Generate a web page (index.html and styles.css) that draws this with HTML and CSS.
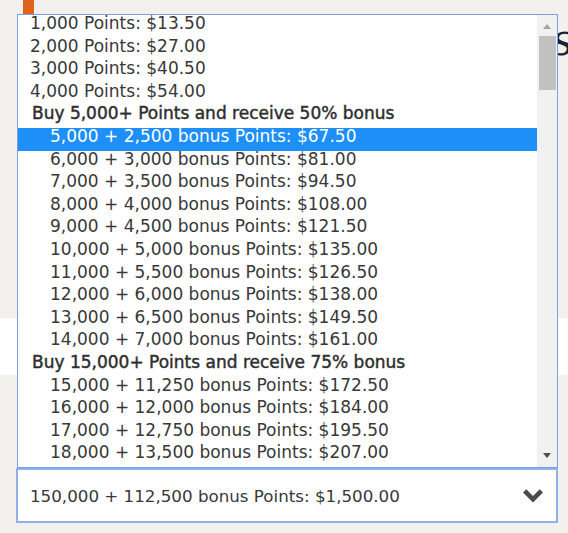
FILE: index.html
```html
<!DOCTYPE html>
<html lang="en">
<head>
<meta charset="utf-8">
<title>Buy Points</title>
<link rel="stylesheet" href="styles.css">
</head>
<body>
<div class="page">
  <header class="hero">
    <span class="accent"></span>
    <h1 class="title">Buy Points</h1>
  </header>
  <div class="band"></div>
  <section class="field">
    <div class="select">
      <span class="value">150,000 + 112,500 bonus Points: $1,500.00</span>
      <svg class="chevron" width="20" height="14" viewBox="0 0 20 14" aria-hidden="true">
        <polygon points="0,3.5 3.3,0.2 10,7 16.7,0.2 20,3.5 10,13.5" fill="#4a4a4f"/>
      </svg>
    </div>
  </section>

  <div class="listbox" role="listbox">
    <div class="options">
      <div class="opt">1,000 Points: $13.50</div>
      <div class="opt">2,000 Points: $27.00</div>
      <div class="opt">3,000 Points: $40.50</div>
      <div class="opt">4,000 Points: $54.00</div>
      <div class="group">Buy 5,000+ Points and receive 50% bonus</div>
      <div class="opt sub selected">5,000 + 2,500 bonus Points: $67.50</div>
      <div class="opt sub">6,000 + 3,000 bonus Points: $81.00</div>
      <div class="opt sub">7,000 + 3,500 bonus Points: $94.50</div>
      <div class="opt sub">8,000 + 4,000 bonus Points: $108.00</div>
      <div class="opt sub">9,000 + 4,500 bonus Points: $121.50</div>
      <div class="opt sub">10,000 + 5,000 bonus Points: $135.00</div>
      <div class="opt sub">11,000 + 5,500 bonus Points: $126.50</div>
      <div class="opt sub">12,000 + 6,000 bonus Points: $138.00</div>
      <div class="opt sub">13,000 + 6,500 bonus Points: $149.50</div>
      <div class="opt sub">14,000 + 7,000 bonus Points: $161.00</div>
      <div class="group">Buy 15,000+ Points and receive 75% bonus</div>
      <div class="opt sub">15,000 + 11,250 bonus Points: $172.50</div>
      <div class="opt sub">16,000 + 12,000 bonus Points: $184.00</div>
      <div class="opt sub">17,000 + 12,750 bonus Points: $195.50</div>
      <div class="opt sub">18,000 + 13,500 bonus Points: $207.00</div>
      <div class="opt sub">19,000 + 14,250 bonus Points: $218.50</div>
      <div class="opt sub">20,000 + 15,000 bonus Points: $230.00</div>
    </div>
    <div class="scrollbar">
      <span class="arrow up"></span>
      <span class="thumb"></span>
      <span class="arrow down"></span>
    </div>
  </div>
</div>
</body>
</html>
```

FILE: styles.css
```css
html, body {
  margin: 0;
  padding: 0;
}

body {
  background: #f2f1ed;
  font-family: "DejaVu Sans", "Liberation Sans", sans-serif;
  color: #383838;
  overflow: hidden;
}

.page {
  position: relative;
  width: 568px;
  height: 533px;
  overflow: hidden;
}

.hero {
  height: 318px;
  display: flex;
  flex-direction: column;
}

.accent {
  display: block;
  width: 11px;
  height: 14px;
  margin-left: 23px;
  background: #e0631c;
}

.title {
  margin: 0 -6px 0 0;
  font-family: "DejaVu Serif", "Liberation Serif", serif;
  font-style: italic;
  font-weight: 400;
  font-size: 44px;
  line-height: 52px;
  text-align: right;
  color: #1b2130;
  white-space: nowrap;
}

.band {
  height: 57px;
  background: #ffffff;
}

.field {
  padding: 93px 0 0 16px;
}

.select {
  box-sizing: border-box;
  width: 542px;
  height: 55px;
  border: 2px solid #8fb0ea;
  background: #ffffff;
  display: flex;
  align-items: center;
  justify-content: space-between;
  padding: 0 13px 0 12px;
}

.value {
  font-size: 16.7px;
  color: #383838;
  white-space: nowrap;
}

.chevron {
  display: block;
  margin-top: 1px;
}

/* open dropdown overlay */
.listbox {
  position: absolute;
  top: 14px;
  left: 17px;
  width: 541px;
  height: 454px;
  box-sizing: border-box;
  border: 1px solid #7c9fdf;
  background: #ffffff;
  display: flex;
  overflow: hidden;
}

.options {
  flex: 1;
  overflow: hidden;
}

.opt,
.group {
  box-sizing: border-box;
  height: 22.6px;
  line-height: 17.6px;
  font-size: 17px;
  white-space: nowrap;
  color: #383838;
}

.opt {
  padding-left: 12px;
}

.opt.sub {
  padding-left: 32px;
}

.group {
  padding-left: 14px;
  color: #2e2e2e;
  -webkit-text-stroke: 0.45px #2e2e2e;
}

.opt.selected {
  background: #1e8ff7;
  color: #ffffff;
}

.scrollbar {
  width: 20px;
  flex: none;
  background: #f1f1f1;
  display: flex;
  flex-direction: column;
  align-items: center;
}

.arrow {
  display: block;
  width: 0;
  height: 0;
  border-left: 4.5px solid transparent;
  border-right: 4.5px solid transparent;
}

.arrow.up {
  margin-top: 9px;
  border-bottom: 5px solid #a3a3a3;
}

.arrow.down {
  margin-top: auto;
  margin-bottom: 9px;
  border-top: 5px solid #505050;
}

.thumb {
  display: block;
  width: 17px;
  height: 54px;
  margin: 7px -1px 0 0;
  background: #c1c1c1;
}
```
